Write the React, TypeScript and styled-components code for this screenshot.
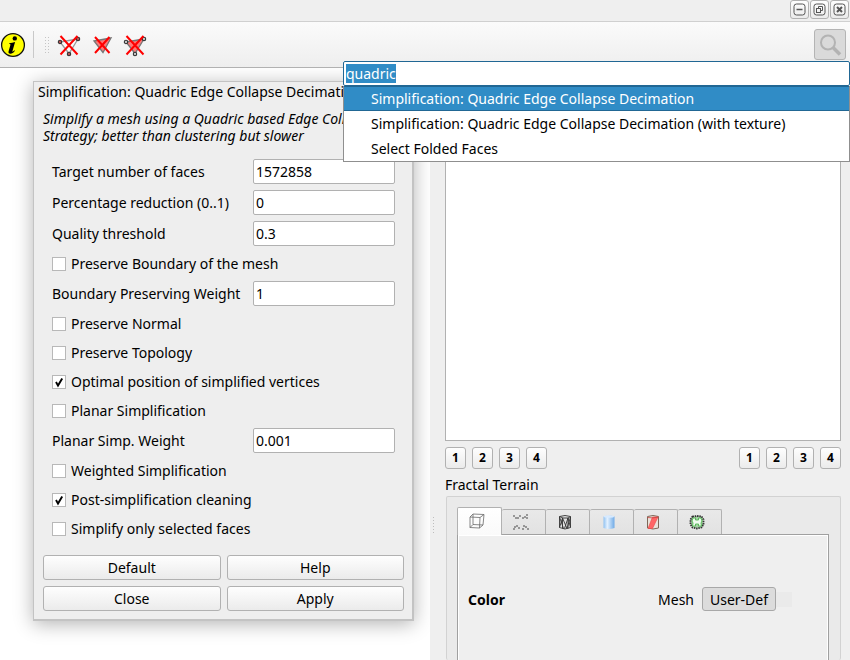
import React, { useEffect, useRef } from 'react';
import styled, { createGlobalStyle, css } from 'styled-components';

const line = '#b1b1b1';
const blue = '#308cc6';

const Global = createGlobalStyle`
  * { box-sizing: border-box; }
  html, body, #root { height: 100%; }
  body { margin: 0; background: #fff; overflow: hidden; }
  body, button, input { font-family: 'Noto Sans', 'Open Sans', sans-serif; font-size: 14px; color: #000; }
  ::selection { background: ${blue}; color: #fff; }
`;

const raised = css`
  border: 1px solid ${line};
  border-radius: 3px;
  background: linear-gradient(#fefefe, #ebebeb);
`;

const Window = styled.div`
  display: flex;
  flex-direction: column;
  height: 100vh;
`;
const TitleStrip = styled.div`
  display: flex;
  justify-content: flex-end;
  gap: 1px;
  height: 22px;
  padding-right: 1px;
  background: #efefef;
  border-bottom: 1px solid #d0d0d0;
`;
const WindowButton = styled.button`
  ${raised}
  display: flex;
  align-items: center;
  justify-content: center;
  width: 19px;
  height: 19px;
  padding: 0;
`;
const Toolbar = styled.div`
  position: relative;
  display: flex;
  align-items: center;
  height: 46px;
  background: linear-gradient(#fbfbfb, #eeeeee);
  border-bottom: 1px solid ${line};
`;
const IconButton = styled.button`
  display: flex;
  width: 33px;
  padding: 0;
  border: 0;
  background: none;
  justify-content: center;
`;
const InfoButton = styled(IconButton)`
  width: 26px;
`;
const Divider = styled.span`
  width: 1px;
  height: 27px;
  margin: 0 10px 0 7px;
  background: #c9c9c9;
`;
const Grip = styled.span`
  width: 6px;
  height: 18px;
  margin-right: 2px;
  background: radial-gradient(circle, #c4c4c4 30%, transparent 31%) 0 0 / 3px 3px;
`;
const SearchButton = styled.button`
  display: flex;
  align-items: center;
  justify-content: center;
  width: 32px;
  height: 31px;
  margin: 0 4px 0 auto;
  padding: 0;
  border: 1px solid #b4b4b4;
  border-radius: 3px;
  background: #dadada;
`;
const SearchPopup = styled.div`
  position: absolute;
  z-index: 2;
  top: 39px;
  right: 0;
  width: calc(100% - 343px);
  background: #fff;
`;
const SearchInput = styled.input`
  display: block;
  width: 100%;
  height: 25px;
  padding: 0 2px;
  border: 1px solid #216794;
  border-radius: 2px;
  outline: 0;
`;
const Results = styled.ul`
  margin: 0;
  padding: 0;
  list-style: none;
  border: 1px solid #8f8f8f;
  border-top: 0;
`;
const Result = styled.li<{ $active?: boolean }>`
  height: 25px;
  padding-left: 27px;
  line-height: 26px;
  white-space: nowrap;
  ${p => p.$active && css`
    background: ${blue};
    color: #fff;
    line-height: 24px;
    border-top: 1px solid #216794;
    border-bottom: 1px solid #216794;
  `}
`;
const Main = styled.main`
  display: grid;
  grid-template-columns: minmax(0, 43fr) minmax(0, 42fr);
  grid-template-rows: minmax(0, 1fr);
  flex: 1;
  min-height: 0;
`;
const Canvas = styled.section`
  padding: 13px 16px 0 33px;
  overflow: hidden;
`;
const Dialog = styled.form`
  display: flex;
  flex-direction: column;
  background: #eee;
  border: 1px solid #c3c3c3;
  border-width: 1px 2px 2px 1px;
  box-shadow: 0 3px 18px rgba(0, 0, 0, 0.3);
  padding: 0 8px 8px 9px;
`;
const DialogTitle = styled.h1`
  margin: 0 -5px;
  font-size: 14px;
  font-weight: 400;
  line-height: 20px;
  white-space: nowrap;
  overflow: hidden;
`;
const Description = styled.p`
  margin: 8px 0 12px;
  font-style: italic;
  line-height: 17px;
`;
const Fields = styled.div`
  padding: 0 9px;
`;
const Field = styled.div`
  display: flex;
  align-items: center;
  justify-content: space-between;
  height: 31px;
`;
const TextBox = styled.input`
  width: 142px;
  height: 25px;
  padding: 0 2px;
  border: 1px solid ${line};
  border-radius: 2px;
  background: #fff;
`;
const Check = styled.label`
  display: flex;
  align-items: center;
  gap: 5px;
  height: 29px;
`;
const Box = styled.input`
  appearance: none;
  width: 14px;
  height: 14px;
  margin: 0;
  border: 1px solid #b8b8b8;
  background: #fff;
  &:checked {
    background: #fff url("data:image/svg+xml,%3Csvg xmlns='http://www.w3.org/2000/svg' viewBox='0 0 12 12'%3E%3Cpath d='M3 6l2 3.6L9.2 2.4' fill='none' stroke='%23000' stroke-width='1.9'/%3E%3C/svg%3E") center / 12px 12px no-repeat;
  }
`;
const Actions = styled.div`
  display: grid;
  grid-template-columns: 1fr 1fr;
  gap: 6px;
  margin-top: 12px;
`;
const PushButton = styled.button`
  ${raised}
  height: 25px;
  padding: 0;
  line-height: 20px;
`;
const Dock = styled.aside`
  display: flex;
  min-width: 0;
  background: #efefef;
`;
const Splitter = styled.div`
  display: flex;
  align-items: center;
  width: 15px;
  padding: 322px 0 0 2px;
`;
const SplitterDots = styled.span`
  width: 3px;
  height: 18px;
  background: radial-gradient(circle, #bdbdbd 30%, transparent 31%) 0 0 / 3px 3px;
`;
const DockBody = styled.div`
  display: flex;
  flex: 1;
  flex-direction: column;
  min-width: 0;
  padding-right: 9px;
`;
const LayerList = styled.div`
  height: 373px;
  background: #fff;
  border: 1px solid ${line};
  border-top: 0;
`;
const Views = styled.div`
  display: flex;
  justify-content: space-between;
  padding: 6px 0;
`;
const ViewGroup = styled.div`
  display: flex;
  gap: 6px;
`;
const ViewButton = styled.button`
  ${raised}
  width: 21px;
  height: 22px;
  padding: 0;
  font-size: 12px;
  font-weight: 700;
  line-height: 20px;
`;
const LayerName = styled.div`
  height: 21px;
  line-height: 20px;
`;
const Frame = styled.section`
  display: flex;
  flex: 1;
  flex-direction: column;
  margin-left: 1px;
  padding: 9px 11px 0 10px;
  border: 1px solid #d2d2d2;
  border-bottom: 0;
  border-radius: 2px;
  background: #eaeaea;
`;
const Tabs = styled.div`
  display: flex;
  align-items: flex-end;
  height: 28px;
`;
const Tab = styled.button<{ $active?: boolean }>`
  display: flex;
  align-items: center;
  justify-content: center;
  width: 44px;
  height: 25px;
  padding: 0 5px 0 0;
  border: 1px solid ${line};
  border-left-width: 0;
  border-bottom: 0;
  border-radius: 2px 2px 0 0;
  background: linear-gradient(#e9e9e9, #e2e2e2);
  ${p => p.$active && css`
    width: 45px;
    height: 28px;
    padding-bottom: 1px;
    border-left-width: 1px;
    background: linear-gradient(#fff, #fafafa);
    margin-bottom: -1px;
    z-index: 1;
  `}
`;
const Pane = styled.div`
  flex: 1;
  border: 1px solid #a0a0a0;
  border-bottom: 0;
  box-shadow: inset 1px 1px #fff, inset -1px 0 #fff;
  background: #efefef;
`;
const ColorRow = styled.div`
  display: flex;
  align-items: center;
  height: 24px;
  margin: 52px 36px 0 10px;
`;
const ColorLabel = styled.strong`
  flex: 1;
`;
const Mode = styled.button`
  height: 24px;
  width: 74px;
  margin-left: 8px;
  padding: 0;
  border: 1px solid #a8a8a8;
  border-radius: 3px;
  background: #dcdcdc;
`;
const Swatch = styled.span`
  width: 16px;
  height: 15px;
  background: #eaeaea;
`;

const WindowGlyph = ({ children }: { children: React.ReactNode }) => (
  <svg width="13" height="13" viewBox="0 0 13 13" fill="none" stroke="#555">
    <rect x="1" y="1" width="11" height="11" rx="2.5" />
    {children}
  </svg>
);

const InfoIcon = () => (
  <svg width="26" height="26" viewBox="0 0 26 26">
    <circle cx="13" cy="13" r="11.4" fill="#ff0" stroke="#111" strokeWidth="1.3" />
    <circle cx="14.8" cy="6.4" r="2.2" />
    <path d="M9.3 11.2c2-.2 3.8-.6 5.8-1.2l-2.7 9.2c-.2.9.5.7 1.9-.9l.6.5c-1.5 2.2-2.9 3-4.5 3-1.7 0-2.2-1-1.8-2.5l1.8-6.2c.2-.8-.2-1-1.2-1z" />
  </svg>
);

type DeleteProps = { face?: boolean; vertex?: string };
const DeleteIcon = ({ face, vertex }: DeleteProps) => (
  <svg width="24" height="24" viewBox="0 0 24 24">
    <path
      d={vertex ? 'M3 9L21 6L12 20.5Z' : 'M4 8L21 5L13 19.5Z'}
      fill={face ? '#ff7878' : '#fafafa'}
      stroke={face ? '#777' : '#999'}
      strokeWidth="1.3"
    />
    {vertex && [[3, 9], [21, 6], [12, 21]].map(([x, y]) => (
      <circle key={x} cx={x} cy={y} r="1.7" fill={vertex} stroke="#333" strokeWidth="1.1" />
    ))}
    <path d={vertex ? 'M3.5 3L20.5 21.5M20.5 3L3.5 21.5' : 'M5 4L19.5 20M19.5 4L5 20'} stroke="#f00" strokeWidth="2" />
  </svg>
);

const BoxIcon = () => (
  <svg width="18" height="18" viewBox="0 0 18 18" fill="none" stroke="#6a6a6a" strokeWidth=".8">
    <path d="M2 5l10 .5-.5 10.5L2 15.5zM5 2l11 .5-1 10.5-10-.5zM5 2L2 5M16 2.5l-4 3M15 13l-3.5 3M5 12.5l-3 3" />
  </svg>
);
const points = [[2, 4], [4, 6], [6, 6], [8, 4], [11, 6], [13, 5], [15, 3], [15, 6], [3, 15], [5, 14], [7, 16], [2, 17], [11, 17], [12, 14], [14, 15], [16, 17]];
const PointsIcon = () => (
  <svg width="18" height="18" viewBox="0 0 18 18" fill="#333">
    {points.map(([x, y]) => <circle key={`${x}-${y}`} cx={x} cy={y - 1} r=".8" />)}
  </svg>
);
const WireIcon = () => (
  <svg width="18" height="18" viewBox="0 0 18 18" fill="#e2e2e2" stroke="#333" strokeWidth=".9">
    <path d="M3.5 3.5Q9 1.5 14.5 3.5V14.5Q9 17.5 3.5 14.5Z" />
    <path d="M3.5 4L7.5 15.5M14.5 4L11 15.5L6.5 5L3.5 14.5M3.5 3.5L7 5h5l2.5-1.5M6.5 5v10.5M12 5v10.5M12 5L8.500 15.500M12 5l2.500 9.500" fill="none" />
  </svg>
);
const SolidIcon = () => (
  <svg width="18" height="18" viewBox="0 0 18 18">
    <defs>
      <linearGradient id="cylinder">
        <stop stopColor="#8fc1f1" /><stop offset=".35" stopColor="#e3f1ff" /><stop offset="1" stopColor="#6faae6" />
      </linearGradient>
    </defs>
    <path d="M3.5 3.5Q9 1.5 14.5 3.5V15Q9 17 3.5 15Z" fill="url(#cylinder)" />
    <ellipse cx="9" cy="3.6" rx="5.3" ry="1.2" fill="#d7eaff" />
  </svg>
);
const SelectionIcon = () => (
  <svg width="18" height="18" viewBox="0 0 18 18">
    <path d="M3.5 3.5Q9 1.5 14.5 3.5V15Q9 17 3.5 15Z" fill="#e9e2da" stroke="#7d6858" />
    <path d="M8.5 4H14L8.5 15.5H4Z" fill="#f66" stroke="#e44" strokeWidth=".6" />
    <path d="M3.5 4.5Q9 5.5 14.5 4" fill="none" stroke="#c44" strokeWidth=".8" />
  </svg>
);
const BorderIcon = () => (
  <svg width="18" height="18" viewBox="0 0 18 18">
    <path d="M4.5 3.5L9 3l4.500.5 2 3v5l-2 3-4.500 1-4.500-1-2-3v-5z" fill="#a9cda9" stroke="#333" strokeWidth="1.8" strokeDasharray="1.5 .8" />
    <path d="M5 5h2.500v2h3V5H13l1 3-1 2 .5 3h-3v-2h-3v2h-3L5 10 4 8z" fill="#eefaee" stroke="#4fb84f" strokeWidth=".9" />
  </svg>
);

const tabIcons: [string, React.FC][] = [
  ['Bounding box', BoxIcon], ['Points', PointsIcon], ['Wireframe', WireIcon],
  ['Solid', SolidIcon], ['Selection', SelectionIcon], ['Boundary', BorderIcon],
];

type Parameter = { label: string; value?: string; checked?: boolean };
const parameters: Parameter[] = [
  { label: 'Target number of faces', value: '1572858' },
  { label: 'Percentage reduction (0..1)', value: '0' },
  { label: 'Quality threshold', value: '0.3' },
  { label: 'Preserve Boundary of the mesh' },
  { label: 'Boundary Preserving Weight', value: '1' },
  { label: 'Preserve Normal' },
  { label: 'Preserve Topology' },
  { label: 'Optimal position of simplified vertices', checked: true },
  { label: 'Planar Simplification' },
  { label: 'Planar Simp. Weight', value: '0.001' },
  { label: 'Weighted Simplification' },
  { label: 'Post-simplification cleaning', checked: true },
  { label: 'Simplify only selected faces' },
];

const ParameterRow = ({ label, value, checked }: Parameter) => {
  const id = label.toLowerCase().replace(/[^a-z]+/g, '-');
  if (value === undefined) {
    return <Check><Box type="checkbox" defaultChecked={checked} />{label}</Check>;
  }
  return (
    <Field>
      <label htmlFor={id}>{label}</label>
      <TextBox id={id} defaultValue={value} />
    </Field>
  );
};

const ViewButtons = () => (
  <ViewGroup>
    {[1, 2, 3, 4].map(n => <ViewButton key={n}>{n}</ViewButton>)}
  </ViewGroup>
);

export default function App() {
  const search = useRef<HTMLInputElement>(null);
  useEffect(() => {
    search.current?.focus();
    search.current?.select();
  }, []);

  return (
    <Window>
      <Global />
      <TitleStrip>
        <WindowButton aria-label="Minimize"><WindowGlyph><path d="M3.5 6.5h6" strokeWidth="1.5" /></WindowGlyph></WindowButton>
        <WindowButton aria-label="Restore"><WindowGlyph><rect x="3.5" y="5.5" width="4" height="4" /><path d="M5.5 5.5v-2h4v4h-2" /></WindowGlyph></WindowButton>
        <WindowButton aria-label="Close"><WindowGlyph><path d="M4 4l5 5M9 4l-5 5" strokeWidth="2" /></WindowGlyph></WindowButton>
      </TitleStrip>
      <Toolbar>
        <InfoButton aria-label="Info"><InfoIcon /></InfoButton>
        <Divider />
        <Grip />
        <IconButton aria-label="Delete vertices"><DeleteIcon vertex="#b55" /></IconButton>
        <IconButton aria-label="Delete faces"><DeleteIcon face /></IconButton>
        <IconButton aria-label="Delete faces and vertices"><DeleteIcon face vertex="#ccc" /></IconButton>
        <SearchButton aria-label="Search">
          <svg width="24" height="24" viewBox="0 0 24 24" fill="none" stroke="#b3b3b3">
            <circle cx="10" cy="9.5" r="7" strokeWidth="2" />
            <path d="M15 14.5l7 7" strokeWidth="3.5" />
          </svg>
        </SearchButton>
        <SearchPopup>
          <SearchInput ref={search} aria-label="Search filters" defaultValue="quadric" />
          <Results>
            <Result $active>Simplification: Quadric Edge Collapse Decimation</Result>
            <Result>Simplification: Quadric Edge Collapse Decimation (with texture)</Result>
            <Result>Select Folded Faces</Result>
          </Results>
        </SearchPopup>
      </Toolbar>
      <Main>
        <Canvas>
          <Dialog onSubmit={e => e.preventDefault()}>
            <DialogTitle>Simplification: Quadric Edge Collapse Decimation</DialogTitle>
            <Description>
              Simplify a mesh using a Quadric based Edge Collapse Strategy; better than clustering but slower
            </Description>
            <Fields>
              {parameters.map(p => <ParameterRow key={p.label} {...p} />)}
            </Fields>
            <Actions>
              {['Default', 'Help', 'Close', 'Apply'].map(a => <PushButton key={a} type="button">{a}</PushButton>)}
            </Actions>
          </Dialog>
        </Canvas>
        <Dock>
          <Splitter><SplitterDots /></Splitter>
          <DockBody>
            <LayerList />
            <Views><ViewButtons /><ViewButtons /></Views>
            <LayerName>Fractal Terrain</LayerName>
            <Frame>
              <Tabs role="tablist">
                {tabIcons.map(([name, Icon], i) => (
                  <Tab key={name} role="tab" aria-label={name} aria-selected={i === 0} $active={i === 0}><Icon /></Tab>
                ))}
              </Tabs>
              <Pane>
                <ColorRow>
                  <ColorLabel>Color</ColorLabel>
                  <span>Mesh</span>
                  <Mode>User-Def</Mode>
                  <Swatch />
                </ColorRow>
              </Pane>
            </Frame>
          </DockBody>
        </Dock>
      </Main>
    </Window>
  );
}
